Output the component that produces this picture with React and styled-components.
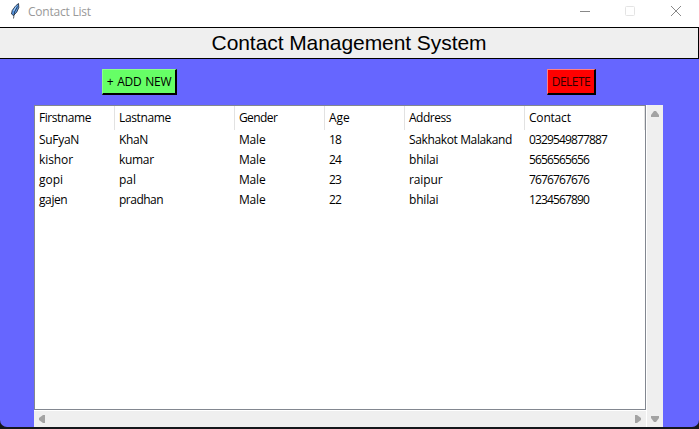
import React from "react";
import styled, { createGlobalStyle } from "styled-components";

const GlobalStyle = createGlobalStyle`
  * { box-sizing: border-box; }
  body { margin: 0; background: #15171b; overflow: hidden; }
`;

const Desktop = styled.div`
  width: 699px;
  height: 429px;
  background: #15171b;
  font: 12px/20px "Open Sans", "Noto Sans", sans-serif;
  color: #000;
`;

const Window = styled.main`
  display: flex;
  flex-direction: column;
  height: 427px;
  background: #6666ff;
  border-radius: 0 0 7px 7px;
  overflow: hidden;
`;

const TitleBar = styled.header`
  display: flex;
  align-items: flex-start;
  height: 27px;
  flex: none;
  background: #fff;
  padding-left: 10px;
`;

const Feather = styled.svg`
  width: 12px;
  height: 17px;
  margin-top: 2px;
`;

const WindowTitle = styled.span`
  margin: 2px auto 0 6px;
  color: #999;
  letter-spacing: -0.22px;
`;

const WindowControls = styled.svg`
  width: 130px;
  height: 24px;
`;

const Banner = styled.h1`
  height: 32px;
  flex: none;
  margin: 0;
  border: 1px solid #000;
  border-left: 0;
  background: #efefef;
  font: 21px/30px "Liberation Sans", Arial, sans-serif;
  letter-spacing: -0.07px;
  text-align: center;
`;

const Toolbar = styled.div`
  display: flex;
  justify-content: space-between;
  flex: none;
  height: 46px;
  padding: 10px 103px 0 102px;
`;

const Button = styled.button`
  width: ${(p) => p.$width}px;
  height: 26px;
  padding: 0;
  border: solid;
  border-width: 1px 2px 2px 1px;
  border-color: ${(p) => p.$light} #000 #000 ${(p) => p.$light};
  background: ${(p) => p.$fill};
  color: ${(p) => p.$ink || "#000"};
  font: inherit;
  line-height: 23px;
  letter-spacing: ${(p) => p.$spacing}px;
  word-spacing: 1px;
  white-space: nowrap;
`;

const TablePane = styled.section`
  display: grid;
  grid-template-columns: 612px 17px;
  grid-template-rows: 305px 17px;
  margin-left: 34px;
`;

const Table = styled.div`
  border: 1px solid #828790;
  background: #fff;
`;

const Row = styled.div`
  display: grid;
  grid-template-columns: 80px 120px 90px 80px 120px 120px;
  grid-template-rows: 100%;
  height: 20px;
`;

const HeaderRow = styled(Row)`
  height: 24px;
  line-height: 24px;
`;

const Cell = styled.span`
  padding-left: 4px;
  white-space: nowrap;
  letter-spacing: ${(p) => p.$spacing || 0}px;
`;

const HeaderCell = styled(Cell)`
  border-right: 1px solid #e2e2e2;
`;

const ScrollBar = styled.div`
  display: flex;
  flex-direction: ${(p) => (p.$vertical ? "column" : "row")};
  justify-content: space-between;
  align-items: center;
  grid-row: ${(p) => (p.$vertical ? "1 / 3" : "2")};
  grid-column: ${(p) => (p.$vertical ? "2" : "1")};
  padding: ${(p) => (p.$vertical ? "5px 0 4px" : "0 4px")};
  border: solid #fff;
  border-width: ${(p) => (p.$vertical ? "0 0 0 1px" : "1px 0 0")};
  background: #efefef;
`;

const Arrow = styled.svg`
  display: block;
  width: 8px;
  height: 8px;
  fill: #a3a3a3;
  transform: rotate(${(p) => p.$turn}deg);
`;

const ScrollArrow = ({ turn }) => (
  <Arrow viewBox="0 0 8 8" $turn={turn}>
    <path d="M3 1h2l3 4v2H0V5z" />
  </Arrow>
);

const headings = [
  ["Firstname", -0.45], ["Lastname", -0.35], ["Gender", -0.6],
  ["Age", 0], ["Address", -0.5], ["Contact", -0.2],
];

const contacts = [
  [["SuFyaN", -0.3], ["KhaN", -0.4], ["Male", -0.2], ["18", -0.86], ["Sakhakot Malakand", -0.37], ["0329549877887", -0.86]],
  [["kishor", -0.1], ["kumar", -0.3], ["Male", -0.2], ["24", -0.86], ["bhilai", -0.2], ["5656565656", -0.86]],
  [["gopi", 0], ["pal", 0], ["Male", -0.2], ["23", -0.86], ["raipur", -0.1], ["7676767676", -0.86]],
  [["gajen", -0.4], ["pradhan", -0.5], ["Male", -0.2], ["22", -0.86], ["bhilai", -0.2], ["1234567890", -0.86]],
];

export default function App() {
  return (
    <Desktop>
      <GlobalStyle />
      <Window>
        <TitleBar>
          <Feather viewBox="0 0 12 17">
            <path d="M8.5 1.5 5.5 4 2.2 8.5 1.5 12 3.5 13.5 6.8 10 8.8 5.5z" fill="#5b9be8" stroke="#18202c" strokeWidth="0.8" />
            <path d="M6 4.5 3.8 9" fill="none" stroke="#a8d0fa" />
            <path d="M7.5 4.5 4.5 10l-1 6.5" fill="none" stroke="#101820" strokeWidth="0.7" />
          </Feather>
          <WindowTitle>Contact List</WindowTitle>
          <WindowControls viewBox="0 0 130 24">
            <g fill="none">
              <path d="M11 11.5h10" stroke="#888" />
              <rect x="56.5" y="6.5" width="9" height="9" rx="1" stroke="#e4e4e4" />
              <path d="m102 6 10 10m0-10-10 10" stroke="#888" />
            </g>
          </WindowControls>
        </TitleBar>
        <Banner>Contact Management System</Banner>
        <Toolbar>
          <Button $width={75} $fill="#66ff66" $light="#8cff8c" $spacing={-0.25}>+ ADD NEW</Button>
          <Button $width={49} $fill="#ff0000" $light="#ff8080" $ink="#300000" $spacing={-0.5}>DELETE</Button>
        </Toolbar>
        <TablePane>
          <Table>
            <HeaderRow>
              {headings.map(([text, spacing]) => (
                <HeaderCell key={text} $spacing={spacing}>{text}</HeaderCell>
              ))}
            </HeaderRow>
            {contacts.map((contact) => (
              <Row key={contact[5][0]}>
                {contact.map(([text, spacing], i) => (
                  <Cell key={i} $spacing={spacing}>{text}</Cell>
                ))}
              </Row>
            ))}
          </Table>
          <ScrollBar $vertical>
            <ScrollArrow turn={0} />
            <ScrollArrow turn={180} />
          </ScrollBar>
          <ScrollBar>
            <ScrollArrow turn={-90} />
            <ScrollArrow turn={90} />
          </ScrollBar>
        </TablePane>
      </Window>
    </Desktop>
  );
}
